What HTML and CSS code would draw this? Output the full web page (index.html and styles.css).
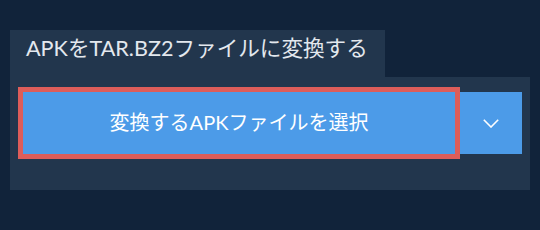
FILE: index.html
```html
<!DOCTYPE html>
<html lang="ja">
<head>
    <meta charset="UTF-8">
    <meta name="viewport" content="width=device-width, initial-scale=1.0">
    <title>APKをTAR.BZ2ファイルに変換する</title>
    <link rel="stylesheet" href="styles.css">
</head>
<body>

    <div class="converter">
        <!-- Tab header -->
        <div class="tab">APKをTAR.BZ2ファイルに変換する</div>

        <!-- File picker panel -->
        <div class="panel">
            <div class="picker">
                <button class="choose-btn">変換するAPKファイルを選択</button>
                <button class="more-btn" aria-label="その他">
                    <svg width="16" height="9" viewBox="0 0 16 9">
                        <polyline points="0.8,0.8 8,8 15.2,0.8" fill="none" stroke="#fff" stroke-width="1.6"/>
                    </svg>
                </button>
            </div>
        </div>
    </div>

</body>
</html>
```

FILE: styles.css
```css
body {
    margin: 0;
    background-color: #11233a;
    font-family: Lato, "Noto Sans CJK JP", sans-serif;
}
.converter {
    padding: 30px 10px 0 10px;
    width: 520px;
}
.tab {
    display: inline-block;
    background-color: #22364d;
    color: #e3e8ee;
    font-size: 21.6px;
    height: 36px;
    line-height: 36px;
    padding: 0 17px 11px 16px;
}
.panel {
    background-color: #22364d;
    height: 113px;
    box-sizing: border-box;
    padding: 15px 8px 0 13px;
}
.picker {
    display: flex;
    height: 62px;
}
.picker button {
    border: none;
    background-color: #4c9be8;
    color: #fff;
    font-family: inherit;
    cursor: pointer;
    padding: 0;
}
.picker .choose-btn {
    width: 432px;
    font-size: 20px;
    padding-bottom: 3px;
    outline: 5px solid #dd5d5a;
}
.more-btn {
    margin-left: 5px;
    width: 62px;
    display: flex;
    align-items: center;
    justify-content: center;
}
```
